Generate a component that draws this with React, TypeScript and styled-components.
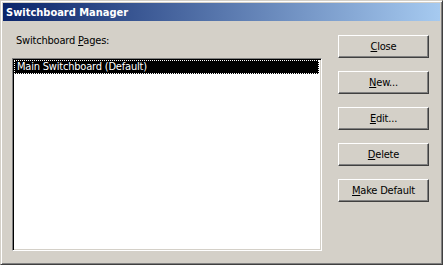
import React from "react";
import styled, { createGlobalStyle } from "styled-components";

const Global = createGlobalStyle`
  html, body { margin: 0; padding: 0; background: #d4d0c8; }
  body { font-family: "DejaVu Sans Condensed", "Liberation Sans", Arial, sans-serif; font-size: 11px; }
`;

const Window = styled.div`
  box-sizing: border-box;
  width: 443px;
  height: 265px;
  background: #d4d0c8;
  border-top: 1px solid #d4d0c8;
  border-left: 1px solid #d4d0c8;
  border-right: 1px solid #404040;
  border-bottom: 1px solid #404040;
  box-shadow: inset 1px 1px 0 #ffffff, inset -1px -1px 0 #808080;
  padding: 2px;
  display: flex;
  flex-direction: column;
`;

const TitleBar = styled.div`
  height: 18px;
  background: linear-gradient(to right, #0a246a, #a6caf0);
  color: #ffffff;
  font-weight: bold;
  font-size: 11px;
  display: flex;
  align-items: center;
  padding-left: 3px;
`;

const Body = styled.div`
  flex: 1;
  display: flex;
  padding: 13px 0 0 9px;
  gap: 16px;
  letter-spacing: -0.2px;
`;

const LeftCol = styled.div`
  width: 310px;
  display: flex;
  flex-direction: column;
`;

const Label = styled.div`
  line-height: 13px;
  height: 13px;
  padding-left: 4px;
  margin-bottom: 11px;
  color: #000;
`;

const ListBox = styled.div`
  box-sizing: border-box;
  height: 193px;
  background: #ffffff;
  border-top: 1px solid #808080;
  border-left: 1px solid #808080;
  border-right: 1px solid #ffffff;
  border-bottom: 1px solid #ffffff;
  box-shadow: inset 1px 1px 0 #000000, inset -1px -1px 0 #d4d0c8;
  padding: 1px 2px 2px 1px;
`;

const ListItem = styled.div<{ $selected?: boolean }>`
  height: 14px;
  line-height: 14px;
  padding-left: 3px;
  background: ${(p) => (p.$selected ? "#000000" : "transparent")};
  color: ${(p) => (p.$selected ? "#ffffff" : "#000000")};
  outline: ${(p) => (p.$selected ? "1px dotted #ffffff" : "none")};
  outline-offset: -1px;
  white-space: nowrap;
`;

const RightCol = styled.div`
  display: flex;
  flex-direction: column;
  gap: 13px;
  padding-top: 1px;
`;

const Button = styled.div`
  box-sizing: border-box;
  width: 91px;
  height: 23px;
  background: #d4d0c8;
  border-top: 1px solid #ffffff;
  border-left: 1px solid #ffffff;
  border-right: 1px solid #404040;
  border-bottom: 1px solid #404040;
  box-shadow: inset -1px -1px 0 #808080;
  display: flex;
  align-items: center;
  justify-content: center;
  color: #000;
`;

const U = styled.span`
  text-decoration: underline;
  text-underline-offset: 1px;
`;

export default function App() {
  return (
    <>
      <Global />
      <Window>
        <TitleBar>Switchboard Manager</TitleBar>
        <Body>
          <LeftCol>
            <Label>
              Switchboard <U>P</U>ages:
            </Label>
            <ListBox>
              <ListItem $selected>Main Switchboard (Default)</ListItem>
            </ListBox>
          </LeftCol>
          <RightCol>
            <Button>
              <U>C</U>lose
            </Button>
            <Button>
              <U>N</U>ew...
            </Button>
            <Button>
              <U>E</U>dit...
            </Button>
            <Button>
              <U>D</U>elete
            </Button>
            <Button>
              <U>M</U>ake Default
            </Button>
          </RightCol>
        </Body>
      </Window>
    </>
  );
}
